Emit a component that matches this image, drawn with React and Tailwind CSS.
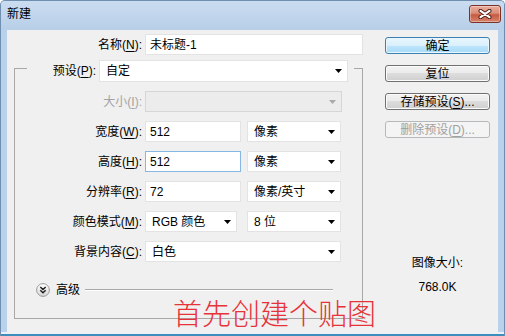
import React from "react";

const U = ({ children }) => (
  <span className="underline underline-offset-[2px] decoration-1">{children}</span>
);

function Arrow({ disabled }) {
  return (
    <svg width="7" height="4" viewBox="0 0 7 4" className="shrink-0">
      <polygon points="0,0 7,0 3.5,4" fill={disabled ? "#a9a9a9" : "#000"} />
    </svg>
  );
}

function Select({ text, className = "", disabled }) {
  return (
    <div
      className={`h-[21px] flex items-center justify-between pl-[6px] pr-[5px] border ${
        disabled ? "bg-[#ececec] border-[#d6d6d6]" : "bg-white border-[#e3e3e3]"
      } ${className}`}
    >
      <span className="whitespace-nowrap">{text}</span>
      <Arrow disabled={disabled} />
    </div>
  );
}

function Input({ text, className = "", focused }) {
  return (
    <div
      className={`h-[21px] flex items-center pl-[4px] bg-white border ${
        focused ? "border-[#86b6e2]" : "border-[#e3e3e3]"
      } ${className}`}
    >
      {text}
    </div>
  );
}

function Label({ children, disabled }) {
  return (
    <div
      className={`w-[127px] text-right whitespace-nowrap ${
        disabled ? "text-[#a3a3a3]" : "text-black"
      }`}
    >
      {children}
    </div>
  );
}

function Btn({ children, kind }) {
  const cls =
    kind === "default"
      ? "border-[#3c7fb1] bg-[linear-gradient(#eaf6fd,#d9f0fc_50%,#bee6fd_50%,#a7d9f5)] text-black shadow-[inset_0_0_0_1px_#e8f6fd]"
      : kind === "disabled"
      ? "border-[#b5b9bc] bg-[#f4f4f4] text-[#a0a0a0]"
      : "border-[#707070] bg-[linear-gradient(#f2f2f2,#ebebeb_50%,#dddddd_50%,#cfcfcf)] text-black shadow-[inset_0_0_0_1px_#fcfcfc]";
  return (
    <div
      className={`h-[17px] w-[105px] rounded-[3px] border flex items-center justify-center whitespace-nowrap ${cls}`}
    >
      {children}
    </div>
  );
}

export default function App() {
  return (
    <div className="relative w-[505px] h-[336px] overflow-hidden bg-[#b9d1ea] border-x border-t border-[#6f8fb0] rounded-t-[5px] text-[12px] leading-[14px] text-black [font-family:'Liberation_Sans','Noto_Sans_CJK_SC',sans-serif]">
      {/* title bar */}
      <div className="h-[29px] flex justify-between items-start bg-[linear-gradient(#cadcf0,#b8cfe8)]">
        <span className="mt-[5px] ml-[6px] leading-[16px]">新建</span>
        <div className="mt-[4px] mr-[3px] w-[32px] h-[18px] rounded-[3px] border border-[#7a3227] bg-[linear-gradient(#eaae9e,#d98c77_45%,#c75a43_55%,#d7836c)] shadow-[inset_0_0_0_1px_rgba(255,255,255,0.35)] flex items-center justify-center">
          <svg width="14" height="10" viewBox="0 0 14 10">
            <path d="M2.5 1.8 L11.5 8.2 M11.5 1.8 L2.5 8.2" stroke="#4a1a12" strokeWidth="4" strokeLinecap="round" />
            <path d="M2.5 1.8 L11.5 8.2 M11.5 1.8 L2.5 8.2" stroke="#fff" strokeWidth="2.2" strokeLinecap="round" />
          </svg>
        </div>
      </div>

      {/* content */}
      <div className="mx-[6px] h-[302px] bg-[#f0f0f0] flex">
        {/* left column */}
        <div className="w-[356px] flex flex-col">
          <div className="mt-[4px] h-[21px] flex items-center">
            <div className="w-[135px] text-right whitespace-nowrap">
              名称(<U>N</U>):
            </div>
            <Input text="未标题-1" className="ml-[3px] w-[218px]" />
          </div>

          <fieldset className="ml-[7px] w-[349px] border border-[#a8a8a8] min-w-0">
            <legend className="ml-[12px] pt-[5px] pr-[6px]">
              <div className="flex items-center">
                <div className="w-[69px] text-right whitespace-nowrap">
                  预设(<U>P</U>):
                </div>
                <Select text="自定" className="ml-[3px] w-[249px] h-[22px]" />
              </div>
            </legend>

            <div className="pt-[9px] flex flex-col gap-[9px]">
              <div className="flex items-center">
                <Label disabled>
                  大小(<U>I</U>):
                </Label>
                <Select text="" disabled className="ml-[3px] w-[197px]" />
              </div>
              <div className="flex items-center">
                <Label>
                  宽度(<U>W</U>):
                </Label>
                <Input text="512" className="ml-[3px] w-[96px]" />
                <Select text="像素" className="ml-[6px] w-[94px]" />
              </div>
              <div className="flex items-center">
                <Label>
                  高度(<U>H</U>):
                </Label>
                <Input text="512" focused className="ml-[3px] w-[96px]" />
                <Select text="像素" className="ml-[6px] w-[94px]" />
              </div>
              <div className="flex items-center">
                <Label>
                  分辨率(<U>R</U>):
                </Label>
                <Input text="72" className="ml-[3px] w-[96px]" />
                <Select text="像素/英寸" className="ml-[6px] w-[94px]" />
              </div>
              <div className="flex items-center">
                <Label>
                  颜色模式(<U>M</U>):
                </Label>
                <Select text="RGB 颜色" className="ml-[3px] w-[92px]" />
                <Select text="8 位" className="ml-[10px] w-[94px]" />
              </div>
              <div className="flex items-center">
                <Label>
                  背景内容(<U>C</U>):
                </Label>
                <Select text="白色" className="ml-[3px] w-[196px]" />
              </div>
            </div>

            <div className="mt-[21px] mb-[21px] h-[14px] flex items-center">
              <svg width="14" height="14" viewBox="0 0 14 14" className="ml-[21px] shrink-0">
                <defs>
                  <linearGradient id="adv" x1="0" y1="0" x2="0" y2="1">
                    <stop offset="0" stopColor="#ffffff" />
                    <stop offset="1" stopColor="#d6d6d6" />
                  </linearGradient>
                </defs>
                <circle cx="7" cy="7" r="6.4" fill="url(#adv)" stroke="#9a9a9a" />
                <path d="M4.3 4 L7 6.5 L9.7 4 M4.3 7.3 L7 9.8 L9.7 7.3" fill="none" stroke="#222" strokeWidth="1.5" />
              </svg>
              <span className="ml-[6px] whitespace-nowrap">高级</span>
              <div className="ml-[5px] mr-[29px] flex-1 h-[2px] border-t border-[#a8a8a8] border-b border-b-white" />
            </div>
          </fieldset>
        </div>

        {/* right column */}
        <div className="ml-[22px] w-[105px] flex flex-col">
          <div className="mt-[7px] flex flex-col gap-[11px]">
            <Btn kind="default">确定</Btn>
            <Btn>复位</Btn>
            <Btn>
              存储预设(<U>S</U>)...
            </Btn>
            <Btn kind="disabled">
              删除预设(<U>D</U>)...
            </Btn>
          </div>
          <div className="mt-[118px] text-center">图像大小:</div>
          <div className="mt-[10px] text-center">768.0K</div>
        </div>
      </div>

      {/* bottom frame */}
      <div className="h-[2px] bg-[#eef0f4]" />
      <div className="h-[2px] bg-[#3d8dbd]" />

      {/* red annotation overlay */}
      <div className="absolute left-[172px] top-[297px] text-[29px] leading-none font-light text-[#e8323a] whitespace-nowrap [font-family:'Noto_Sans_CJK_SC',sans-serif]">
        首先创建个贴图
      </div>
    </div>
  );
}
